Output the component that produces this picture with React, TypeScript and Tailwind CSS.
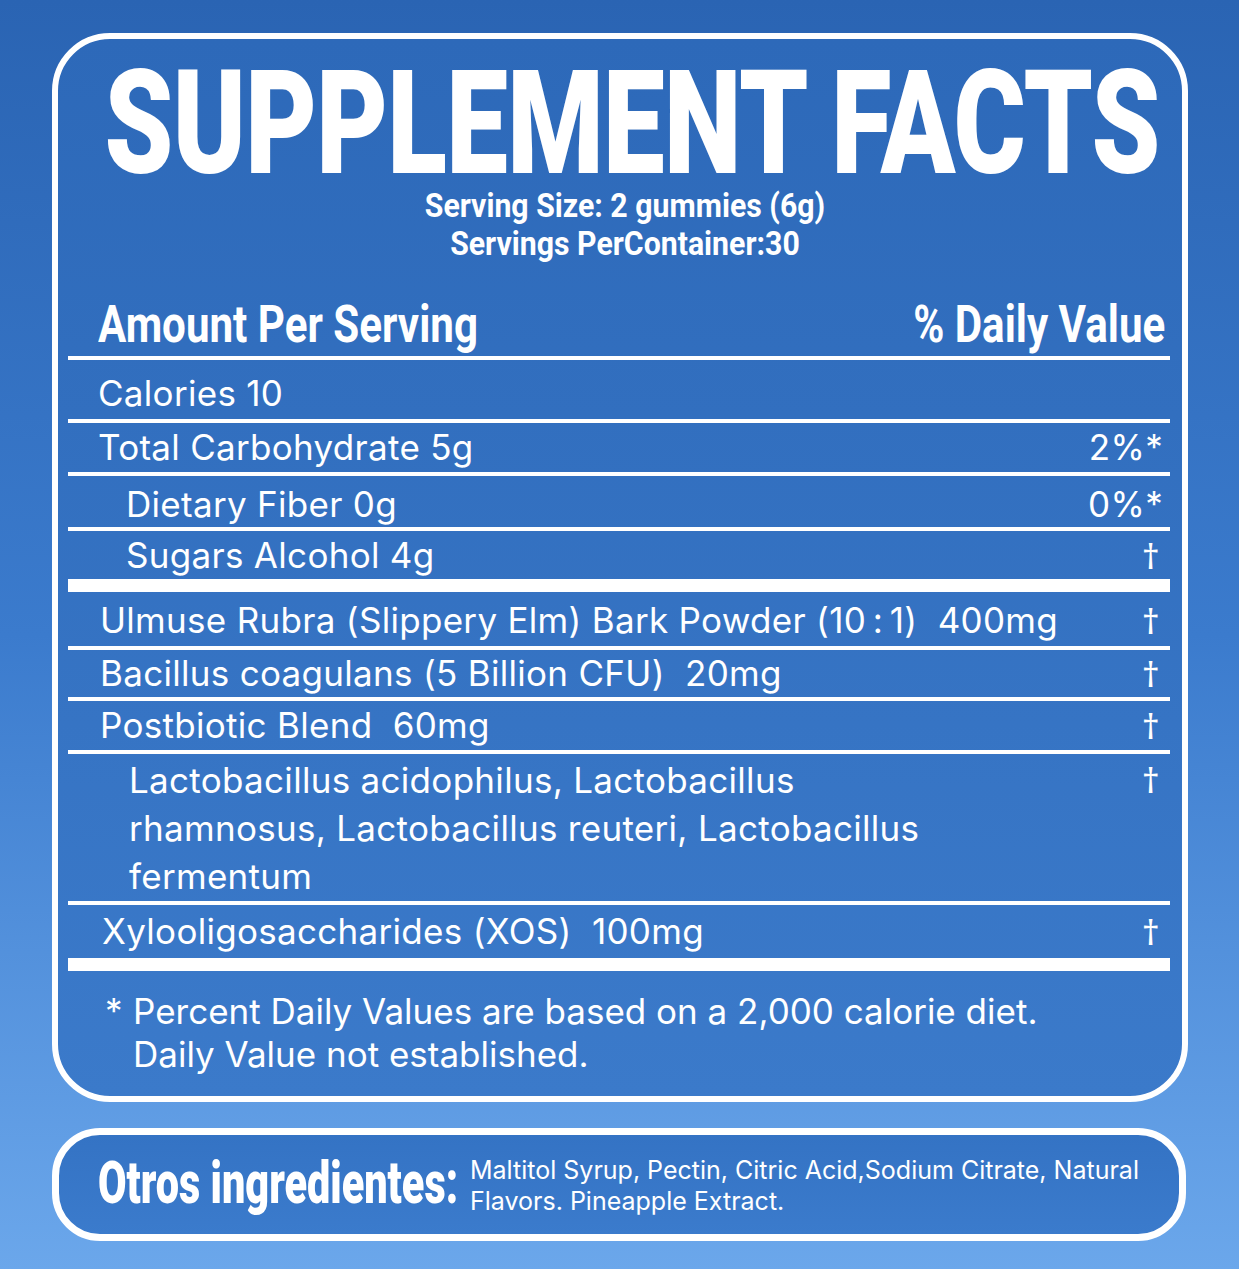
export default function App() {
  const rows = [
    { label: 'Calories 10', dv: '', indent: false, h: 'h-[63px]', pad: 'pt-[7px]' },
    { label: 'Total Carbohydrate 5g', dv: '2%*', indent: false, h: 'h-[53px]', pad: '' },
    { label: 'Dietary Fiber 0g', dv: '0%*', indent: true, h: 'h-[55px]', pad: 'pt-[5px]' },
  ];

  const ingredients = [
    { label: 'Ulmuse Rubra (Slippery Elm) Bark Powder (10\u2009:\u20091)\u00a0\u00a0400mg', h: 'h-[58px]', pad: 'pt-[3px]' },
    { label: 'Bacillus coagulans (5 Billion CFU)\u00a0\u00a020mg', h: 'h-[51px]', pad: '' },
    { label: 'Postbiotic Blend\u00a0\u00a060mg', h: 'h-[53px]', pad: '' },
  ];

  const dagger = <span className="font-['Noto_Sans',sans-serif]">†</span>;

  return (
    <div
      className="w-[1239px] h-[1269px] bg-gradient-to-b from-[#2a64b3] via-[#3b7bcd] to-[#6ba7eb] pt-[33px] px-[52px] text-white"
      style={{ fontFamily: 'Inter, "Noto Sans", sans-serif' }}
    >
      {/* main panel */}
      <div className="w-[1136px] h-[1069px] border-[6px] border-white rounded-[58px] bg-gradient-to-b from-[#2d69b9] to-[#3b7aca] pl-[10px] pr-[12px]">
        <div className="h-[251px] flex flex-col items-center pl-[12px]" style={{ fontFamily: 'Roboto, sans-serif' }}>
          <div className="mt-[24px] ml-[14px] text-[145px] font-black leading-[120px] whitespace-nowrap scale-x-[0.76] tracking-[-1px]">
            SUPPLEMENT FACTS
          </div>
          <div className="mt-[3px] text-[34px] font-bold leading-[38px] whitespace-nowrap scale-x-[0.89] text-center">
            <div>Serving Size: 2 gummies (6g)</div>
            <div>Servings PerContainer:30</div>
          </div>
        </div>

        {/* header */}
        <div
          className="h-[70px] border-b-4 border-white flex items-center justify-between pl-[30px] pr-[5px] pt-[3px]"
          style={{ fontFamily: 'Roboto, sans-serif' }}
        >
          <span className="text-[52px] font-bold leading-none whitespace-nowrap scale-x-[0.81] origin-left">Amount Per Serving</span>
          <span className="text-[52px] font-bold leading-none whitespace-nowrap scale-x-[0.81] origin-right">% Daily Value</span>
        </div>

        <div className="text-[35px] leading-none tracking-[0.3px]">
          {rows.map((r, i) => (
            <div key={i} className={`${r.h} ${r.pad} border-b-4 border-white flex items-center justify-between pr-[7px] ${r.indent ? 'pl-[58px]' : 'pl-[30px]'}`}>
              <span>{r.label}</span>
              <span>{r.dv}</span>
            </div>
          ))}
          <div className="h-[61px] border-b-[13px] border-white flex items-center justify-between pl-[58px] pr-[10px]">
            <span>Sugars Alcohol 4g</span>
            {dagger}
          </div>

          {ingredients.map((r, i) => (
            <div key={i} className={`${r.h} ${r.pad} border-b-4 border-white flex items-center justify-between pl-[32px] pr-[10px]`}>
              <span>{r.label}</span>
              {dagger}
            </div>
          ))}

          <div className="h-[151px] border-b-4 border-white flex justify-between pl-[61px] pr-[10px] pt-[2px] leading-[48px]">
            <span>
              Lactobacillus acidophilus, Lactobacillus
              <br />
              rhamnosus, Lactobacillus reuteri, Lactobacillus
              <br />
              fermentum
            </span>
            {dagger}
          </div>

          <div className="h-[66px] border-b-[13px] border-white flex items-center justify-between pl-[34px] pr-[10px]">
            <span>Xylooligosaccharides (XOS)&nbsp;&nbsp;100mg</span>
            {dagger}
          </div>

          <div className="flex pl-[37px] pt-[19px] leading-[43px] tracking-normal">
            <span className="w-[28px] shrink-0">*</span>
            <div>
              <div>Percent Daily Values are based on a 2,000 calorie diet.</div>
              <div>Daily Value not established.</div>
            </div>
          </div>
        </div>
      </div>

      {/* other ingredients */}
      <div className="mt-[26px] w-[1134px] h-[113px] border-[7px] border-white rounded-[48px] bg-gradient-to-b from-[#3473c4] to-[#3b7bcc] flex items-center pl-[39px]">
        <div className="w-[372px] shrink-0 pb-[4px]" style={{ fontFamily: 'Roboto, sans-serif' }}>
          <span className="inline-block text-[60px] font-black leading-none whitespace-nowrap scale-x-[0.69] origin-left">
            Otros ingredientes:
          </span>
        </div>
        <div className="text-[25px] leading-[31px] w-[710px] pt-[2px]">
          Maltitol Syrup, Pectin, Citric Acid,Sodium Citrate, Natural
          <br />
          Flavors. Pineapple Extract.
        </div>
      </div>
    </div>
  );
}
